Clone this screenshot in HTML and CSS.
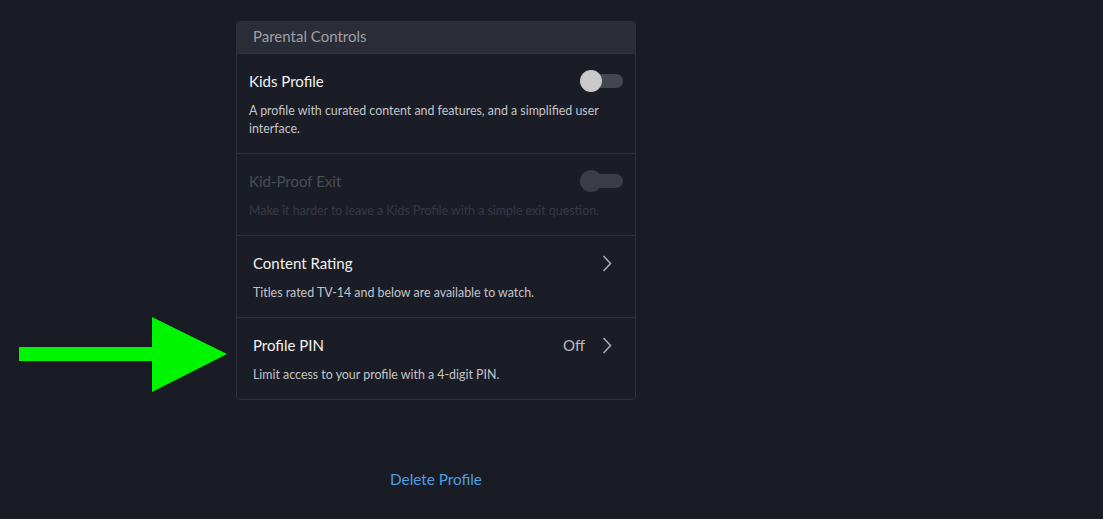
FILE: index.html
```html
<!DOCTYPE html>
<html>
<head>
<meta charset="utf-8">
<link rel="stylesheet" href="styles.css">
</head>
<body>
<div class="page">
  <div class="column">
    <section class="card">
      <div class="card-header">Parental Controls</div>
      <div class="row row-toggle">
        <div class="row-top">
          <span class="row-title">Kids Profile</span>
          <span class="toggle"><span class="knob"></span></span>
        </div>
        <p class="row-desc">A profile with curated content and features, and a simplified user interface.</p>
      </div>
      <div class="row row-toggle disabled">
        <div class="row-top">
          <span class="row-title">Kid-Proof Exit</span>
          <span class="toggle"><span class="knob"></span></span>
        </div>
        <p class="row-desc">Make it harder to leave a Kids Profile with a simple exit question.</p>
      </div>
      <div class="row row-link">
        <div class="row-top">
          <span class="row-title">Content Rating</span>
          <span class="row-end">
            <svg class="chev" width="10" height="17" viewBox="0 0 10 17"><path d="M1.5 1 L8.5 8.5 L1.5 16" fill="none" stroke="#a9abb1" stroke-width="1.6"/></svg>
          </span>
        </div>
        <p class="row-desc">Titles rated TV-14 and below are available to watch.</p>
      </div>
      <div class="row row-link last">
        <div class="row-top">
          <span class="row-title">Profile PIN</span>
          <span class="row-end">
            <span class="value">Off</span>
            <svg class="chev" width="10" height="17" viewBox="0 0 10 17"><path d="M1.5 1 L8.5 8.5 L1.5 16" fill="none" stroke="#a9abb1" stroke-width="1.6"/></svg>
          </span>
        </div>
        <p class="row-desc">Limit access to your profile with a 4-digit PIN.</p>
      </div>
    </section>
    <a class="delete" href="#">Delete Profile</a>
  </div>
  <svg class="arrow" width="230" height="80" viewBox="0 0 230 80">
    <polygon points="19,30 152,30 152,0 227,37 152,75 152,44 19,44" fill="#00f500"/>
  </svg>
</div>
</body>
</html>
```

FILE: styles.css
```css
html, body {
  margin: 0;
  padding: 0;
  background: #1a1c25;
}
body {
  font-family: Lato, "Noto Sans", sans-serif;
  width: 1103px;
  height: 519px;
  overflow: hidden;
}
.page {
  position: relative;
  padding: 21px 0 0 236px;
}
.column {
  width: 400px;
  display: flex;
  flex-direction: column;
  align-items: center;
}
.card {
  width: 400px;
  box-sizing: border-box;
  border: 1px solid #30323b;
  border-radius: 4px;
  background: #1b1d26;
  overflow: hidden;
}
.card-header {
  height: 31px;
  box-sizing: border-box;
  background: #2b2d36;
  color: #9d9fa6;
  font-size: 15px;
  line-height: 29px;
  padding-left: 16px;
}
.row {
  border-top: 1px solid #30323b;
  box-sizing: border-box;
  padding: 0 12px 0 16px;
}
.row-toggle {
  height: 100px;
  padding-left: 12px;
  padding-top: 16px;
}
.row-toggle.disabled {
  height: 82px;
}
.row-link {
  height: 82px;
  padding-top: 16px;
}
.row-top {
  display: flex;
  align-items: center;
  justify-content: space-between;
  height: 22px;
}
.row-title {
  color: #f1f1f3;
  font-size: 15px;
}
.row-desc {
  margin: 10px 0 0 0;
  color: #c3c5ca;
  font-size: 12.4px;
  line-height: 18px;
}
.disabled .row-title { color: #4a4c55; }
.disabled .row-desc { color: #363842; }
.toggle {
  position: relative;
  width: 43px;
  height: 14px;
  border-radius: 7px;
  background: #444650;
}
.knob {
  position: absolute;
  left: 0;
  top: -4px;
  width: 22px;
  height: 22px;
  border-radius: 50%;
  background: #c9c9c9;
}
.disabled .toggle { background: #3a3c46; }
.disabled .knob { background: #3a3c46; }
.row-end {
  display: flex;
  align-items: center;
  gap: 17px;
  margin-right: 11px;
}
.value {
  color: #b9bbc0;
  font-size: 15px;
}
.chev { display: block; }
.delete {
  margin-top: 70px;
  color: #4c9fe2;
  text-decoration: none;
  font-size: 15.3px;
}
.arrow {
  position: absolute;
  left: 0;
  top: 317px;
}
```
